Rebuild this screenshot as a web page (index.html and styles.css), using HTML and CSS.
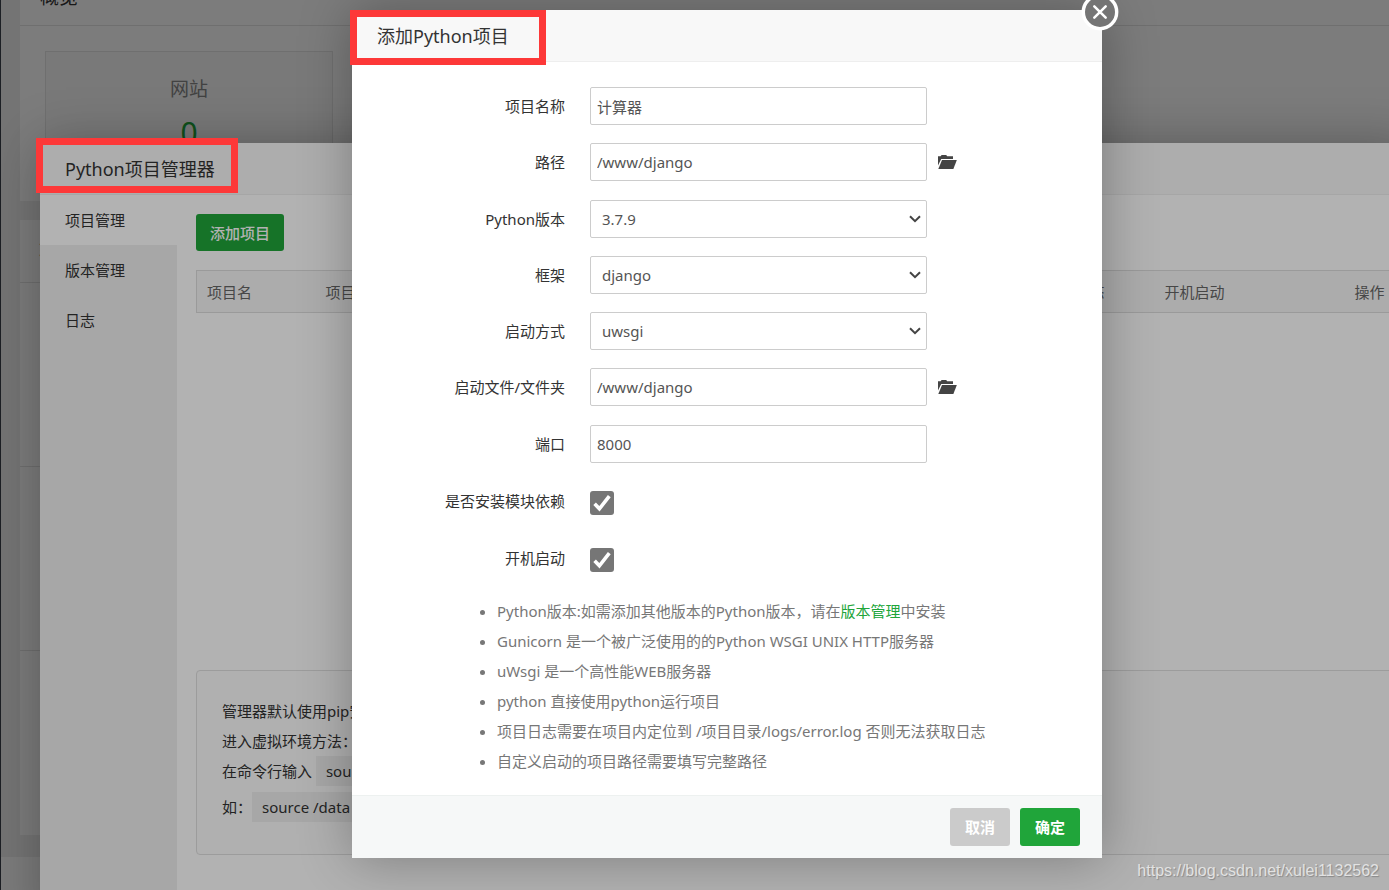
FILE: index.html
```html
<!DOCTYPE html>
<html lang="zh-CN">
<head>
<meta charset="utf-8">
<title>添加Python项目</title>
<link rel="stylesheet" href="styles.css">
</head>
<body>
<div class="screen">
  <main class="home">
    <section class="panel overview">
      <h2 class="panel-title">概览</h2>
      <div class="stat">
        <span class="stat-name">网站</span>
        <a class="stat-value" href="#sites">0</a>
      </div>
    </section>
    <section class="panel software">
      <h2 class="software-title">软件</h2>
      <div class="software-row"></div>
      <div class="software-row"></div>
      <div class="software-row"></div>
    </section>
    <div class="home-footer"></div>
  </main>

  <div class="shade"></div>

  <section class="manager">
    <h2 class="window-title">Python项目管理器</h2>
    <div class="manager-body">
      <nav class="side">
        <a class="side-item active" href="#projects">项目管理</a>
        <a class="side-item" href="#versions">版本管理</a>
        <a class="side-item" href="#logs">日志</a>
      </nav>
      <div class="manager-content">
        <button class="btn btn-add" type="button">添加项目</button>
        <div class="table-area">
          <table class="projects">
            <thead>
              <tr><th class="col-name">项目名</th><th>项目路径</th><th class="col-state">状态</th><th class="col-boot">开机启动</th><th class="col-action">操作</th></tr>
            </thead>
          </table>
        </div>
        <div class="help">
          <p>管理器默认使用pip安装</p>
          <p>进入虚拟环境方法：</p>
          <p>在命令行输入 <code>source</code></p>
          <p class="example">如：<code>source /data</code></p>
        </div>
      </div>
    </div>
  </section>

  <div class="shade"></div>

  <section class="dialog" role="dialog" aria-labelledby="dialog-title">
    <h1 class="window-title" id="dialog-title">添加Python项目</h1>
    <button class="close" type="button" aria-label="关闭">
      <svg viewBox="0 0 38 38" width="38" height="38"><circle cx="19" cy="19" r="16.7" fill="#757575" stroke="#fff" stroke-width="3.4"/><path d="M13.3 13.3 24.7 24.7M24.7 13.3 13.3 24.7" stroke="#fff" stroke-width="2.5" stroke-linecap="round"/></svg>
    </button>
    <form class="form">
      <div class="group">
        <div class="row">
          <label class="label" for="name">项目名称</label>
          <input class="field" id="name" type="text" value="计算器">
        </div>
        <div class="row">
          <label class="label" for="path">路径</label>
          <input class="field" id="path" type="text" value="/www/django">
          <button class="folder" type="button" aria-label="选择路径"><svg viewBox="0 0 19 14" width="19" height="14"><path d="M0 1.3h2.6L3.6 0h4.6l1 1.3H15V4H3.2L0 10.6z"/><path d="M4 5h14.8l-3.4 9H.3z"/></svg></button>
        </div>
      </div>
      <div class="group">
        <div class="row">
          <label class="label" for="version">Python版本</label>
          <div class="select-wrap">
            <select class="field" id="version"><option>3.7.9</option></select>
            <svg class="chevron" viewBox="0 0 12 8" width="12" height="8"><path d="M1 1.2 6 6.2 11 1.2"/></svg>
          </div>
        </div>
        <div class="row">
          <label class="label" for="framework">框架</label>
          <div class="select-wrap">
            <select class="field" id="framework"><option>django</option></select>
            <svg class="chevron" viewBox="0 0 12 8" width="12" height="8"><path d="M1 1.2 6 6.2 11 1.2"/></svg>
          </div>
        </div>
        <div class="row">
          <label class="label" for="mode">启动方式</label>
          <div class="select-wrap">
            <select class="field" id="mode"><option>uwsgi</option></select>
            <svg class="chevron" viewBox="0 0 12 8" width="12" height="8"><path d="M1 1.2 6 6.2 11 1.2"/></svg>
          </div>
        </div>
        <div class="row">
          <label class="label" for="entry">启动文件/文件夹</label>
          <input class="field" id="entry" type="text" value="/www/django">
          <button class="folder" type="button" aria-label="选择启动文件"><svg viewBox="0 0 19 14" width="19" height="14"><path d="M0 1.3h2.6L3.6 0h4.6l1 1.3H15V4H3.2L0 10.6z"/><path d="M4 5h14.8l-3.4 9H.3z"/></svg></button>
        </div>
      </div>
      <div class="group checks">
        <div class="row">
          <label class="label" for="port">端口</label>
          <input class="field" id="port" type="text" value="8000">
        </div>
        <div class="row">
          <label class="label" for="deps">是否安装模块依赖</label>
          <div class="check">
            <input class="check-input" id="deps" type="checkbox" checked>
            <svg class="tick" viewBox="0 0 24 24" width="24" height="24"><path d="M4.6 12.8 9.4 17.8 19.3 5.2"/></svg>
          </div>
        </div>
        <div class="row">
          <label class="label" for="boot">开机启动</label>
          <div class="check">
            <input class="check-input" id="boot" type="checkbox" checked>
            <svg class="tick" viewBox="0 0 24 24" width="24" height="24"><path d="M4.6 12.8 9.4 17.8 19.3 5.2"/></svg>
          </div>
        </div>
      </div>
      <ul class="notes">
        <li>Python版本:如需添加其他版本的Python版本，请在<a href="#versions">版本管理</a>中安装</li>
        <li>Gunicorn 是一个被广泛使用的的Python WSGI UNIX HTTP服务器</li>
        <li>uWsgi 是一个高性能WEB服务器</li>
        <li>python 直接使用python运行项目</li>
        <li>项目日志需要在项目内定位到 /项目目录/logs/error.log 否则无法获取日志</li>
        <li>自定义启动的项目路径需要填写完整路径</li>
      </ul>
    </form>
    <footer class="actions">
      <button class="btn btn-cancel" type="button">取消</button>
      <button class="btn" type="submit">确定</button>
    </footer>
  </section>

  <div class="mark mark-manager"></div>
  <div class="mark mark-dialog"></div>
  <span class="watermark">https://blog.csdn.net/xulei1132562</span>
</div>
</body>
</html>
```

FILE: styles.css
```css
* {
  box-sizing: border-box;
}

body {
  margin: 0;
  font-family: "Noto Sans", "Noto Sans CJK SC", sans-serif;
  font-size: 15px;
  line-height: 30px;
  color: #333;
}

h1,
h2,
p,
ul {
  margin: 0;
  font-weight: 400;
}

a {
  text-decoration: none;
}

button,
input,
select {
  font: inherit;
  color: inherit;
}

.screen {
  position: relative;
  height: 100vh;
  overflow: hidden;
}

/* Home page behind the windows */
.home {
  height: 100%;
  display: flex;
  flex-direction: column;
  background: #f0f0f0;
  border-left: 1px solid #3c414b;
}

.panel {
  margin-left: 19px;
  background: #fff;
}

.overview {
  height: 231px;
  margin-top: -30px;
  flex: none;
  overflow: hidden;
}

.panel-title {
  height: 56px;
  padding-left: 20px;
  border-bottom: 1px solid #e4e4e4;
  font-size: 19px;
  line-height: 54px;
}

.stat {
  width: 288px;
  height: 200px;
  margin: 25px;
  padding-top: 18px;
  border: 1px solid #e6e6e6;
  background: #fafafa;
  display: flex;
  flex-direction: column;
  align-items: center;
}

.stat-name {
  font-size: 19px;
  line-height: 38px;
  color: #888;
}

.stat-value {
  font-size: 30px;
  line-height: 50px;
  color: #20a53a;
}

.software {
  margin-top: 19px;
  margin-bottom: 22px;
  flex: none;
}

.software-title {
  height: 63px;
  padding-left: 19px;
  border-bottom: 1px solid #e4e4e4;
  font-size: 19px;
  line-height: 63px;
}

.software-row {
  height: 184px;
  border-bottom: 1px solid #e4e4e4;
}

.software-row:last-child {
  border-bottom: 0;
}

.home-footer {
  flex: 1;
  background: #fff;
}

.shade {
  position: absolute;
  inset: 0;
  background: rgba(0, 0, 0, 0.3);
}

.manager,
.dialog {
  position: absolute;
  background: #fff;
  box-shadow: 1px 1px 50px rgba(0, 0, 0, 0.3);
}

.window-title {
  height: 52px;
  padding-left: 25px;
  border-bottom: 1px solid #eee;
  background: #f8f8f8;
  font-size: 18px;
  line-height: 52px;
}

/* Project manager window */
.manager {
  top: 143px;
  left: 40px;
  right: -26px;
  bottom: -40px;
  display: flex;
  flex-direction: column;
}

.manager-body {
  flex: 1;
  display: flex;
}

.side {
  width: 137px;
  background: #f0f0f0;
}

.side-item {
  display: block;
  padding-left: 25px;
  line-height: 50px;
  color: #333;
}

.side-item.active {
  background: #fff;
}

.manager-content {
  flex: 1;
  padding: 19px;
}

.btn {
  width: 60px;
  height: 38px;
  padding: 0;
  border: 0;
  border-radius: 3px;
  background: #20a53a;
  color: #fff;
  font-weight: 700;
  line-height: 36px;
}

.btn-add {
  display: block;
  width: 88px;
  height: 37px;
  font-weight: 500;
}

.table-area {
  height: 419px;
  padding-top: 19px;
}

.projects {
  width: 100%;
  table-layout: fixed;
  border-collapse: collapse;
}

.projects tr {
  border: 1px solid #ddd;
  background: #f7f7f7;
}

.projects th {
  height: 42px;
  padding: 0 10px;
  font-weight: 400;
  text-align: left;
  color: #666;
}

.projects .col-name {
  width: 119px;
}

.projects .col-state {
  width: 90px;
}

.projects .col-boot {
  width: 190px;
}

.projects .col-action {
  width: 51px;
}

.help {
  padding: 25px 25px 32px;
  border: 1px solid #e0e0e0;
  border-radius: 4px;
  background: #fcfcfc;
}

.help p {
  white-space: nowrap;
}

.help .example {
  margin-top: 6px;
}

.help code {
  display: inline-block;
  padding: 0 10px;
  background: #f0f0f0;
  font-family: inherit;
}

/* Add-project dialog */
.dialog {
  top: 10px;
  left: 352px;
  width: 750px;
}

.close {
  position: absolute;
  top: -17px;
  right: -17px;
  padding: 0;
  border: 0;
  background: none;
}

.close svg {
  display: block;
}

.form {
  padding: 25px 0 19px;
}

.group {
  display: grid;
  gap: 18px;
  margin-bottom: 19px;
}

.checks {
  gap: 19px;
}

.row {
  display: flex;
  align-items: center;
  height: 38px;
}

.label {
  width: 213px;
  margin-right: 25px;
  text-align: right;
}

.field {
  width: 337px;
  height: 38px;
  padding: 0 6px;
  border: 1px solid #ccc;
  border-radius: 2px;
  background: #fff;
  color: #555;
}

.select-wrap {
  position: relative;
}

.select-wrap .field {
  display: block;
  padding: 0 11px;
  appearance: none;
}

.chevron {
  position: absolute;
  right: 6px;
  top: 15px;
  fill: none;
  stroke: #444;
  stroke-width: 2;
  pointer-events: none;
}

.folder {
  margin-left: 11px;
  padding: 0;
  border: 0;
  background: none;
  fill: #444;
}

.folder svg {
  display: block;
}

.check {
  position: relative;
  width: 24px;
  height: 24px;
  margin-top: 4px;
}

.check-input {
  display: block;
  width: 24px;
  height: 24px;
  margin: 0;
  border-radius: 3px;
  appearance: none;
  background: #767676;
}

.tick {
  position: absolute;
  inset: 0;
  fill: none;
  stroke: #fff;
  stroke-width: 3.6;
  pointer-events: none;
}

.notes {
  padding-left: 145px;
  color: #777;
}

.notes a {
  color: #20a53a;
}

.actions {
  display: flex;
  justify-content: flex-end;
  gap: 10px;
  padding: 12px 22px;
  border-top: 1px solid #edf1f0;
  background: #f6f8f8;
}

.btn-cancel {
  background: #cbcbcb;
}

/* Red annotation frames and watermark */
.mark {
  position: absolute;
  height: 55px;
  border: 7px solid #fd3838;
  pointer-events: none;
}

.mark-manager {
  top: 138px;
  left: 36px;
  width: 202px;
}

.mark-dialog {
  top: 10px;
  left: 350px;
  width: 196px;
}

.watermark {
  position: absolute;
  right: 10px;
  bottom: 9px;
  font-family: "Liberation Sans", sans-serif;
  font-size: 16px;
  line-height: 20px;
  color: #e2e2e2;
  text-shadow: 1px 1px 1px #888;
}
```
